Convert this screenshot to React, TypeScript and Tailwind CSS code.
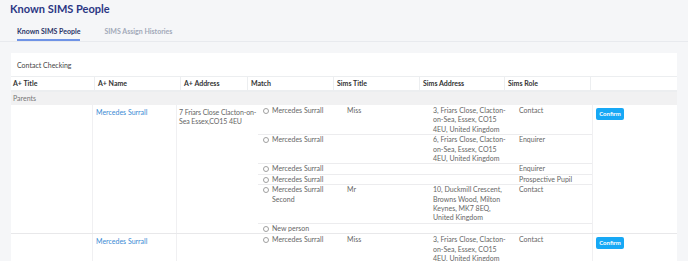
import React from "react";

interface Match {
  name: string;
  title?: string;
  address?: string;
  role?: string;
}

interface Row {
  name: string;
  address: string;
  matches: Match[];
}

const rows: Row[] = [
  {
    name: "Mercedes Surrall",
    address: "7 Friars Close Clacton-on-Sea Essex,CO15 4EU",
    matches: [
      { name: "Mercedes Surrall", title: "Miss", address: "3, Friars Close, Clacton-on-Sea, Essex, CO15 4EU, United Kingdom", role: "Contact" },
      { name: "Mercedes Surrall", address: "6, Friars Close, Clacton-on-Sea, Essex, CO15 4EU, United Kingdom", role: "Enquirer" },
      { name: "Mercedes Surrall", role: "Enquirer" },
      { name: "Mercedes Surrall", role: "Prospective Pupil" },
      { name: "Mercedes Surrall Second", title: "Mr", address: "10, Duckmill Crescent, Browns Wood, Milton Keynes, MK7 8EQ, United Kingdom", role: "Contact" },
      { name: "New person" },
    ],
  },
  {
    name: "Mercedes Surrall",
    address: "",
    matches: [
      { name: "Mercedes Surrall", title: "Miss", address: "3, Friars Close, Clacton-on-Sea, Essex, CO15 4EU, United Kingdom", role: "Contact" },
    ],
  },
];

const headers = ["A+ Title", "A+ Name", "A+ Address", "Match", "Sims Title", "Sims Address", "Sims Role", ""];

export default function App() {
  return (
    <div className="h-[261px] bg-[#f5f6f8] font-['Lato',sans-serif] text-[7px] leading-[9.4px] text-[#666] overflow-hidden">
      {/* Page title */}
      <div className="h-[20px] pl-[10px] pt-[3px]">
        <h1 className="text-[11px] leading-[12px] font-bold text-[#2b3784]">Known SIMS People</h1>
      </div>

      {/* Tabs */}
      <div className="flex h-[22px] gap-[24px] border-b border-[#e8eaee] pl-[17px]">
        <div className="flex flex-col justify-end">
          <span className="pb-[3px] font-bold text-[#2b3468]">Known SIMS People</span>
          <div className="h-[2px] w-full bg-[#6f93e6]" />
        </div>
        <div className="flex flex-col justify-end">
          <span className="pb-[5px] font-bold text-[#a2a9b8]">SIMS Assign Histories</span>
        </div>
      </div>

      {/* Card */}
      <div className="ml-[11px] mt-[11px] w-[666px] bg-white">
        <div className="h-[23px] pl-[6px] pt-[8px] text-[#444]">Contact Checking</div>

        {/* Header */}
        <div className="grid h-[16px] grid-cols-[84px_86px_67px_86px_86px_85px_86px_1fr] border-t border-b-2 border-[#eceef0]">
          {headers.map((h, i) => (
            <div
              key={i}
              className={`flex items-center font-bold text-[#333] ${i === 0 ? "pl-[2px]" : "pl-[3px]"} ${i < 7 ? "border-r border-[#eceef0]" : ""}`}
            >
              {h}
            </div>
          ))}
        </div>

        {/* Group row */}
        <div className="flex h-[13px] items-center bg-[#f1f1f2] pl-[2px] text-[#777]">Parents</div>

        {/* Rows */}
        {rows.map((row, ri) => (
          <div key={ri} className="grid grid-cols-[82px_84px_81px_335px_1fr] border-b border-[#e8e8ea]">
            <div className="border-r border-[#f0f0f2]" />
            <div className="border-r border-[#f0f0f2] pl-[3px] pt-[3px] text-[#3a8ad4]">{row.name}</div>
            <div className="pl-[2px] pt-[3px]">
              <div className="w-[82px] tracking-[-0.1px]">{row.address}</div>
            </div>
            <div className="border-r border-[#f0f0f2] pt-[1px]">
              {row.matches.map((m, mi) => (
                <div
                  key={mi}
                  className={`grid grid-cols-[85px_86px_86px_78px] ${mi < row.matches.length - 1 ? "border-b border-[#ececee]" : ""}`}
                >
                  <div className="flex pl-[5px] pr-[2px]">
                    <span className="mr-[3px] mt-[2px] h-[6px] w-[6px] shrink-0 rounded-full border border-[#a0a0a0]" />
                    <span>{m.name}</span>
                  </div>
                  <div className="pl-[4px]">{m.title}</div>
                  <div className="pl-[4px] pr-[6px]">{m.address}</div>
                  <div className="pl-[4px]">{m.role}</div>
                </div>
              ))}
            </div>
            <div className="pl-[3px] pt-[3px]">
              <button className="h-[12px] w-[28px] rounded-[2px] bg-[#17a8f5] text-[6px] font-bold leading-[12px] text-white">
                Confirm
              </button>
            </div>
          </div>
        ))}
      </div>
    </div>
  );
}
